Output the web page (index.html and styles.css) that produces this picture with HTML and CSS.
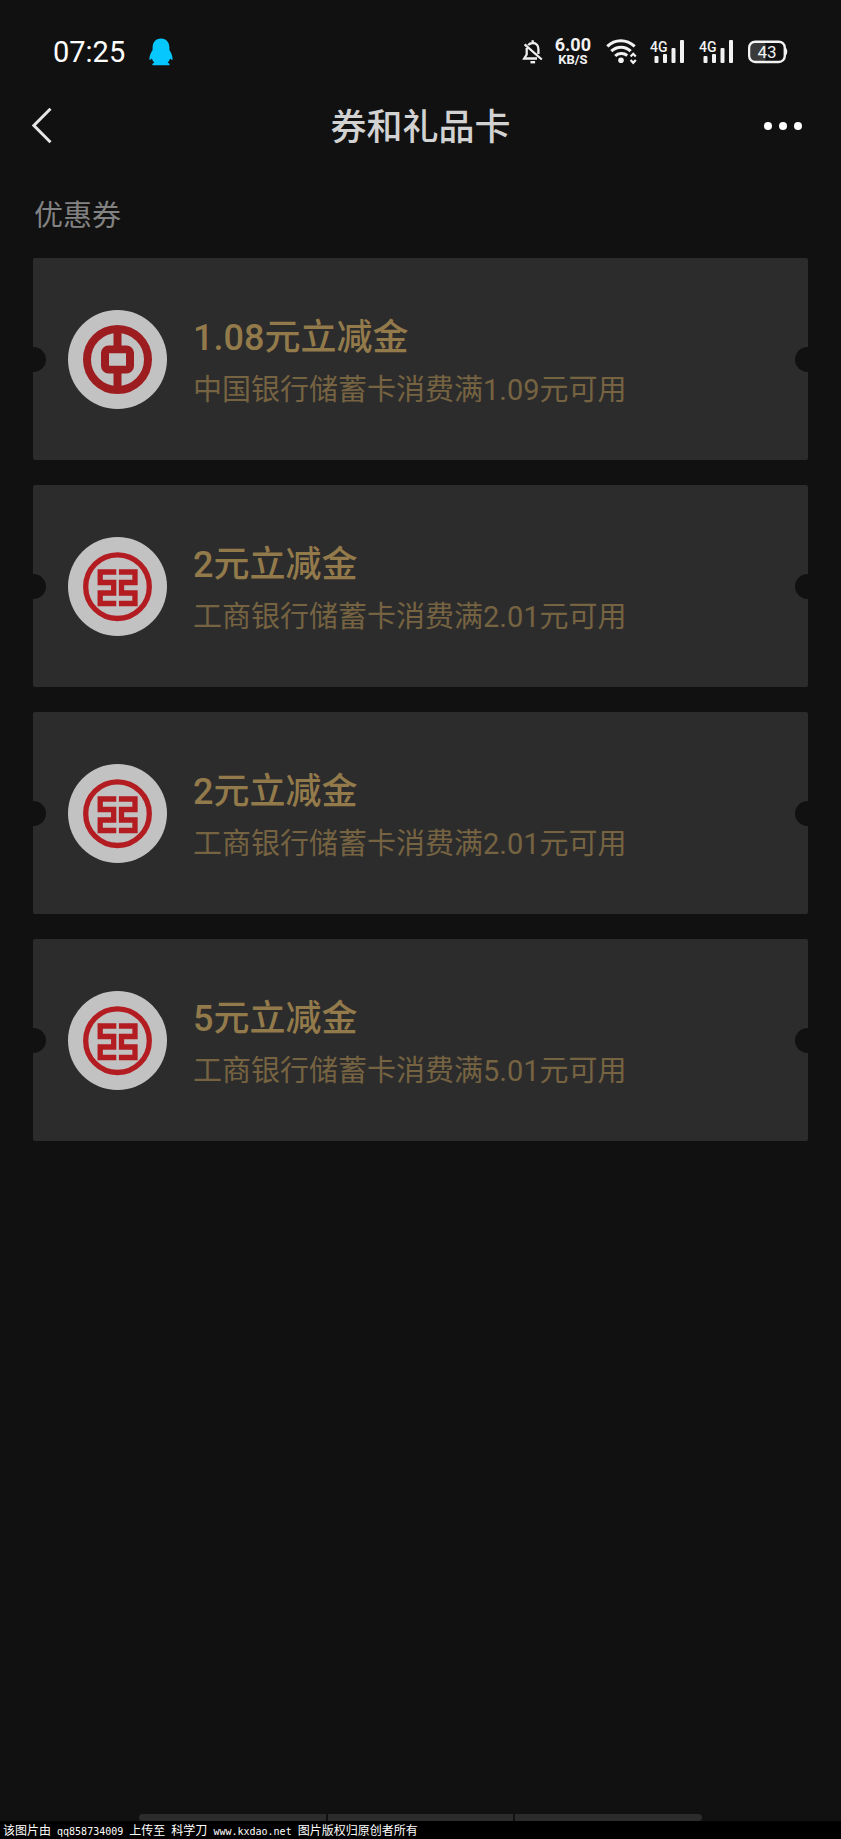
FILE: index.html
```html
<!DOCTYPE html>
<html lang="zh-CN">
<head>
<meta charset="utf-8">
<meta name="viewport" content="width=device-width, initial-scale=1">
<title>券和礼品卡</title>
<link rel="stylesheet" href="styles.css">
</head>
<body>
<svg class="defs" width="0" height="0" aria-hidden="true">
  <symbol id="boc" viewBox="0 0 99 99">
    <circle cx="49.5" cy="49.5" r="49.5" fill="#c2c2c2"/>
    <g fill="none" stroke="#9c1c20" stroke-width="8">
      <circle cx="49.5" cy="49.500" r="30.5"/>
      <rect x="37" y="39.500" width="25" height="20" rx="3.5"/>
      <path d="M49.5 20v18M49.5 61v18"/>
      <path d="M41 43.500h17v12H41z" fill="#c2c2c2" stroke="none"/>
    </g>
  </symbol>
  <symbol id="icbc" viewBox="0 0 99 99">
    <circle cx="49.5" cy="49.5" r="49.5" fill="#c2c2c2"/>
    <g fill="none" stroke="#b31d22" stroke-width="5.300">
      <circle cx="49.5" cy="49.7" r="31.800"/>
      <path d="M48.300 35H32.200V45.500H45.700V56H32.200V66.500H48.300M50.900 35H67V45.500H53.500V56H67V66.500H50.900"/>
    </g>
  </symbol>
</svg>
<div class="screen">
  <div class="status">
    <time class="clock">07:25</time>
    <svg class="penguin" width="24" height="28" viewBox="0 0 24 28" fill="#06c8ff"><path d="M12 0.500C6.500 0.500 3.600 4.500 3.600 9.500V12C2 14.500.3 18 .4 21.200c.1 1.200.8 1.200 2.400-.6.5 1.600 1.400 3 2.600 4.100-2 .5-2.300 1.200-1.800 2.600h16.800c.5-1.400.2-2.100-1.800-2.600 1.200-1.100 2.100-2.500 2.600-4.100 1.600 1.800 2.300 1.800 2.400.6.1-3.200-1.600-6.700-3.200-9.200V9.500C20.400 4.500 17.500.5 12 .5z"/></svg>
    <div class="indicators">
      <svg width="22" height="26" viewBox="0 0 22 26" fill="none" stroke="#eee" stroke-width="2.300"><path d="M6.200 6.200C7 5 8.500 4 10.700 4c3.600 0 5.700 2.700 5.700 6v5M4.700 9v6.500L2.200 19.500H15M10.700 4V1.200M2.600 5.300l17.200 15.200"/><path d="M8.500 23.200h4.600" stroke-width="2.400"/></svg>
      <div class="speed"><span class="rate">6.00</span><span class="unit">KB/S</span></div>
      <svg class="wifi" width="32" height="26" viewBox="0 0 32 26" fill="none" stroke="#f2f2f2" stroke-width="3.100"><path d="M1.300 7.300C9-.2 20.500-.2 28.700 7.300M5.300 12.200c5.600-5.300 13.800-5.300 19.400 0M9.200 17c3-3 8.500-3.300 12 -.6"/><circle cx="15" cy="21.300" r="2.800" fill="#f2f2f2" stroke="none"/><path d="M24.600 17.600l2.600-2.800 2.600 2.800M24.600 21l2.600 2.800 2.600-2.800" stroke-width="2.200"/></svg>
      <svg class="signal" width="35" height="26" viewBox="0 0 35 26" fill="#f2f2f2"><text x="0" y="13">4G</text><rect x="4.500" y="17" width="4" height="7" rx="1"/><rect x="13" y="15" width="4" height="9" rx="1"/><rect x="21.500" y="9" width="4" height="15" rx="1"/><rect x="30" y="1" width="4" height="23" rx="1"/></svg>
      <svg class="signal" width="35" height="26" viewBox="0 0 35 26" fill="#f2f2f2"><text x="0" y="13">4G</text><rect x="4.500" y="17" width="4" height="7" rx="1"/><rect x="13" y="15" width="4" height="9" rx="1"/><rect x="21.500" y="9" width="4" height="15" rx="1"/><rect x="30" y="1" width="4" height="23" rx="1"/></svg>
      <svg class="battery" width="40" height="26" viewBox="0 0 40 26"><rect x="3" y="3.500" width="15" height="19" rx="4" fill="#3a3a3a"/><rect x="1.200" y="2.700" width="35.600" height="20.300" rx="6" fill="none" stroke="#f2f2f2" stroke-width="2.400"/><path d="M37.500 8.500c2.300 1.500 2.300 6.500 0 8.500z" fill="#f2f2f2"/><text x="19" y="19" text-anchor="middle" fill="#f2f2f2">43</text></svg>
    </div>
  </div>
  <header class="nav">
    <button class="icon-button" type="button" aria-label="返回"><svg width="20" height="38" viewBox="0 0 20 38" fill="none" stroke="#e6e6e6" stroke-width="3"><path d="M18.500 1.800L1.900 18.500l16.600 16.700"/></svg></button>
    <h1>券和礼品卡</h1>
    <button class="icon-button more" type="button" aria-label="更多"><svg width="40" height="10" viewBox="0 0 40 10" fill="#fff"><circle cx="5" cy="5" r="4"/><circle cx="20" cy="5" r="4"/><circle cx="35" cy="5" r="4"/></svg></button>
  </header>
  <main class="content">
    <h2>优惠券</h2>
    <div class="coupons">
      <a class="coupon" href="#c1"><svg class="logo" aria-hidden="true"><use href="#boc"/></svg><span class="info"><strong>1.08元立减金</strong><span class="terms">中国银行储蓄卡消费满1.09元可用</span></span></a>
      <a class="coupon" href="#c2"><svg class="logo" aria-hidden="true"><use href="#icbc"/></svg><span class="info"><strong>2元立减金</strong><span class="terms">工商银行储蓄卡消费满2.01元可用</span></span></a>
      <a class="coupon" href="#c3"><svg class="logo" aria-hidden="true"><use href="#icbc"/></svg><span class="info"><strong>2元立减金</strong><span class="terms">工商银行储蓄卡消费满2.01元可用</span></span></a>
      <a class="coupon" href="#c4"><svg class="logo" aria-hidden="true"><use href="#icbc"/></svg><span class="info"><strong>5元立减金</strong><span class="terms">工商银行储蓄卡消费满5.01元可用</span></span></a>
    </div>
  </main>
  <div class="tray"><span></span><span></span><span></span></div>
  <footer class="credit"><span>该图片由</span> qq858734009 <span>上传至</span> <span>科学刀</span> www.kxdao.net <span>图片版权归原创者所有</span></footer>
</div>
</body>
</html>
```
FILE: styles.css
```css
* { box-sizing: border-box; }
body {
  margin: 0;
  background: #111;
  color: #f2f2f2;
  font-family: Roboto, "Noto Sans CJK SC", sans-serif;
}
.defs { position: absolute; }
.screen {
  min-height: 100vh;
  display: flex;
  flex-direction: column;
}
.status {
  display: flex;
  align-items: center;
  height: 84px;
  padding: 19px 53px 0;
}
.clock {
  font-size: 29px;
  line-height: 36px;
  color: #fff;
}
.penguin { margin-left: 24px; }
.indicators {
  display: flex;
  align-items: center;
  margin-left: auto;
}
.speed {
  display: flex;
  flex-direction: column;
  align-items: center;
  margin: 0 15px 0 11px;
  font-weight: 700;
}
.rate { font-size: 18px; line-height: 16px; }
.unit { font-size: 13px; line-height: 14px; }
.wifi { margin-right: 12px; }
.signal { margin-right: 14px; }
.signal text { font-size: 14px; font-weight: 500; }
.battery text { font-size: 17px; }
.nav {
  display: flex;
  align-items: center;
  height: 84px;
  padding: 0 32px;
}
.icon-button {
  display: flex;
  align-items: center;
  width: 60px;
  height: 60px;
  padding: 0;
  border: 0;
  background: none;
}
.more { justify-content: flex-end; padding-right: 6px; }
h1 {
  flex: 1;
  margin: 0;
  padding-top: 4px;
  color: #d2d2d2;
  font-size: 36px;
  font-weight: 500;
  line-height: 48px;
  text-align: center;
}
.content {
  flex: 1;
  padding: 26px 33px 0;
}
h2 {
  margin: 0 0 20px;
  padding-left: 1px;
  color: #828282;
  font-size: 29px;
  font-weight: 400;
  line-height: 44px;
}
.coupons { display: grid; gap: 25px; }
.coupon {
  position: relative;
  display: flex;
  align-items: center;
  gap: 26px;
  min-height: 202px;
  padding: 0 35px;
  overflow: hidden;
  border-radius: 2px;
  background: #2c2c2c;
  color: #937a4b;
  text-decoration: none;
}
.coupon::before,
.coupon::after {
  content: "";
  position: absolute;
  top: 50%;
  width: 25px;
  height: 25px;
  margin-top: -12px;
  border-radius: 50%;
  background: #111;
}
.coupon::before { left: -12px; }
.coupon::after { right: -12px; }
.logo { flex: none; width: 99px; height: 99px; }
.info {
  display: flex;
  flex-direction: column;
  padding-top: 10px;
}
strong { font-size: 36px; font-weight: 500; line-height: 52px; }
.terms { color: #766341; font-size: 29px; line-height: 52px; }
.tray {
  display: grid;
  grid-template-columns: 187fr 184fr 187fr;
  gap: 2px;
  width: 67%;
  height: 7px;
  margin: 0 auto;
  overflow: hidden;
  border-radius: 5px;
}
.tray span { background: #2c2c2c; }
.credit {
  height: 18px;
  padding-left: 3px;
  background: #000;
  color: #fff;
  font: 10px/18px "DejaVu Sans Mono", "Noto Sans CJK SC", monospace;
  white-space: nowrap;
}
.credit span { font-family: "Noto Sans CJK SC", sans-serif; font-size: 12px; }
```
